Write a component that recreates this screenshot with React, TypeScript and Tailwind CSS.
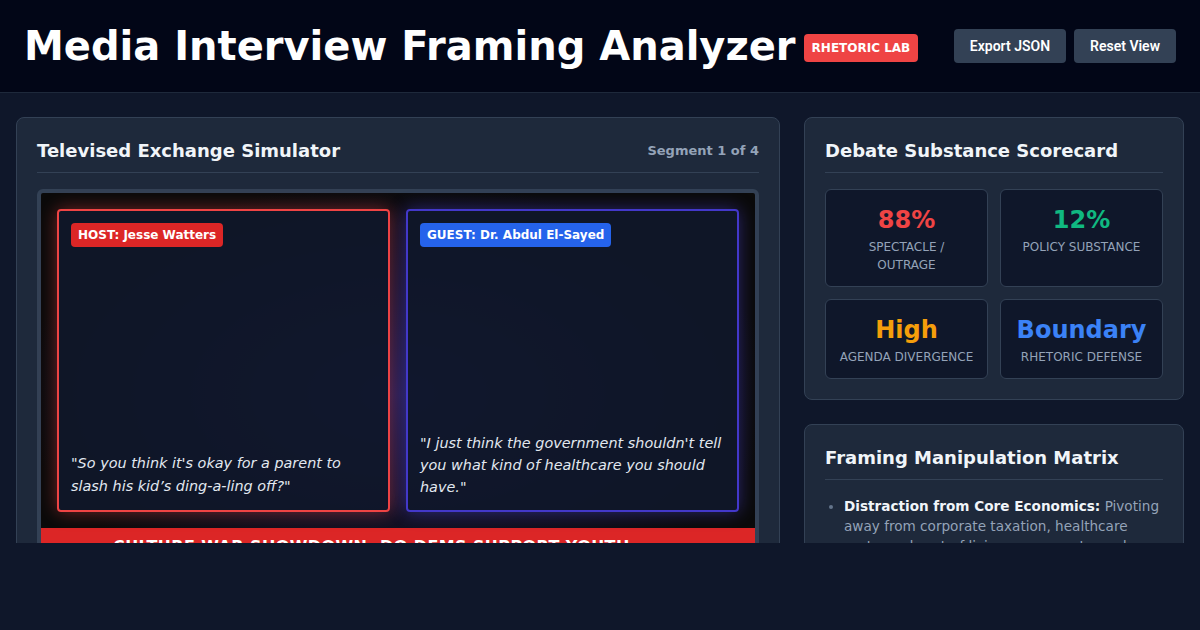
import React from "react";

const stats = [
  { value: "88%", label: "Spectacle / Outrage", color: "text-[#ef4444]" },
  { value: "12%", label: "Policy Substance", color: "text-[#10b981]" },
  { value: "High", label: "Agenda Divergence", color: "text-[#f59e0b]" },
  { value: "Boundary", label: "Rhetoric Defense", color: "text-[#3b82f6]" },
];

const Panel: React.FC<{ title: string; right?: string; children: React.ReactNode }> = ({ title, right, children }) => (
  <div className="bg-[#1e293b] border border-[#334155] rounded-lg p-5">
    <div className="flex items-start justify-between border-b border-[#334155] pb-2 mb-4">
      <h2 className="text-[18px] leading-[26px] font-bold text-[#f1f5f9]">{title}</h2>
      {right && <span className="text-[13px] leading-[26px] font-bold text-[#94a3b8]">{right}</span>}
    </div>
    {children}
  </div>
);

export default function App() {
  return (
    <div className="h-[630px] bg-[#0f172a]" style={{ fontFamily: '"DejaVu Sans", sans-serif' }}>
      <div className="h-[543px] overflow-hidden">
        <header className="h-[93px] bg-[#020617] border-b border-[#1e293b] flex items-center justify-between px-6">
          <div className="flex items-center gap-2">
            <h1 className="text-[40px] leading-none font-bold text-white">Media Interview Framing Analyzer</h1>
            <span className="bg-[#ef4444] text-white text-[12px] font-bold px-2 py-[5px] rounded mt-1">RHETORIC LAB</span>
          </div>
          <div className="flex gap-2" style={{ fontFamily: "Roboto, sans-serif" }}>
            <button className="bg-[#334155] text-white text-[14px] font-semibold h-[34px] px-4 rounded">Export JSON</button>
            <button className="bg-[#334155] text-white text-[14px] font-semibold h-[34px] px-4 rounded">Reset View</button>
          </div>
        </header>

        <main className="grid grid-cols-[764px_380px] gap-6 px-4 pt-6">
          <Panel title="Televised Exchange Simulator" right="Segment 1 of 4">
            <div className="border-4 border-[#334155] rounded-md bg-[radial-gradient(ellipse_at_center,#1e1b4b_0%,#0a0a0a_75%)]">
              <div className="grid grid-cols-2 gap-4 p-4">
                <div className="h-[303px] border-2 border-[#ef4444] rounded bg-[#0f172a]/90 shadow-[0_0_18px_rgba(239,68,68,0.45)] p-3 flex flex-col justify-between">
                  <span className="self-start bg-[#dc2626] text-white text-[12px] font-bold px-[7px] py-[3px] rounded-sm">HOST: Jesse Watters</span>
                  <p className="italic text-[14.4px] leading-[23px] text-[#e2e8f0]">"So you think it's okay for a parent to slash his kid’s ding-a-ling off?"</p>
                </div>
                <div className="h-[303px] border-2 border-[#4338ca] rounded bg-[#0f172a]/90 shadow-[0_0_18px_rgba(79,70,229,0.45)] p-3 flex flex-col justify-between">
                  <span className="self-start bg-[#2563eb] text-white text-[12px] font-bold px-[7px] py-[3px] rounded-sm">GUEST: Dr. Abdul El-Sayed</span>
                  <p className="italic text-[14.4px] leading-[22px] text-[#e2e8f0]">"I just think the government shouldn't tell you what kind of healthcare you should have."</p>
                </div>
              </div>
              <div className="bg-[#dc2626] pl-[72px] pr-[72px] pt-[7px] pb-3 text-left text-white text-[16px] leading-[24px] tracking-wide font-bold uppercase">
                Culture War Showdown: Do Dems Support Youth Gender Surgery?
              </div>
            </div>
          </Panel>

          <div className="flex flex-col gap-6">
            <Panel title="Debate Substance Scorecard">
              <div className="grid grid-cols-2 gap-3">
                {stats.map((s) => (
                  <div key={s.value} className="bg-[#0f172a] border border-[#334155] rounded-md px-3 pt-[14px] pb-3 text-center">
                    <div className={`text-[24px] leading-[32px] font-bold mb-[2px] ${s.color}`}>{s.value}</div>
                    <div className="text-[12px] leading-[18px] uppercase text-[#94a3b8]">{s.label}</div>
                  </div>
                ))}
              </div>
            </Panel>
            <Panel title="Framing Manipulation Matrix">
              <ul className="list-disc pl-[19px] marker:text-[#64748b] text-[13.6px] leading-[20px] text-[#94a3b8]">
                <li>
                  <strong className="text-[#f1f5f9]">Distraction from Core Economics:</strong> Pivoting away from corporate taxation, healthcare costs, and cost-of-living pressures toward culture-war flashpoints.
                </li>
              </ul>
            </Panel>
          </div>
        </main>
      </div>
    </div>
  );
}
